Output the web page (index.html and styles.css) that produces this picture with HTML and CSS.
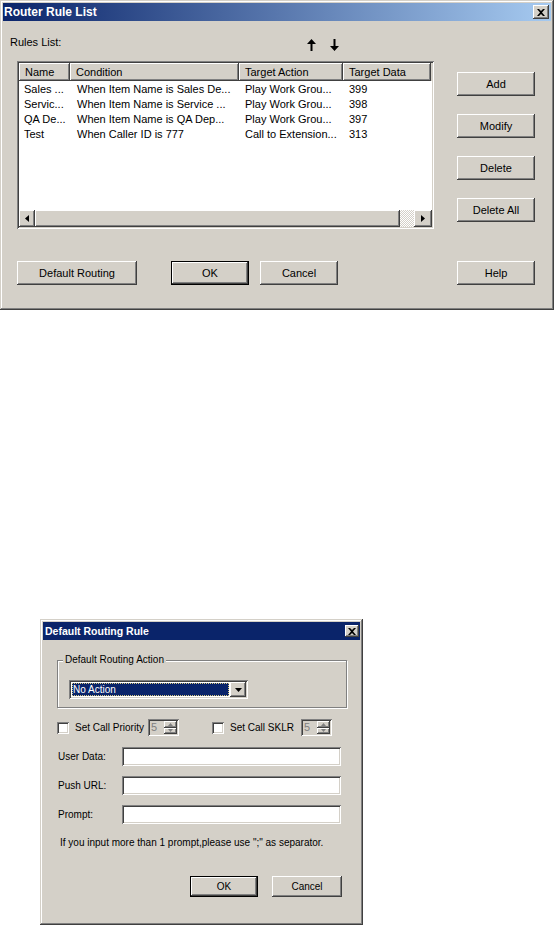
FILE: index.html
```html
<!DOCTYPE html>
<html lang="en">
<head>
    <meta charset="UTF-8">
    <meta name="viewport" content="width=device-width, initial-scale=1.0">
    <title>Router Rule List</title>
    <link rel="stylesheet" href="styles.css">
</head>
<body>
    <div class="win router">
        <div class="titlebar">
            <span>Router Rule List</span>
            <span class="close raised">
                <svg width="8" height="7" viewBox="0 0 8 7"><polygon points="0,0 2,0 4,2 6,0 8,0 5,3.5 8,7 6,7 4,5 2,7 0,7 3,3.5" fill="#000"/></svg>
            </span>
        </div>

        <div class="rules-head">
            <span class="rules-label">Rules List:</span>
            <span class="arrow">
                <svg width="9" height="12" viewBox="0 0 9 12"><polygon points="4.5,0 9,5 5.5,5 5.5,12 3.5,12 3.5,5 0,5" fill="#000"/></svg>
            </span>
            <span class="arrow arrow-down">
                <svg width="9" height="12" viewBox="0 0 9 12"><polygon points="4.5,12 9,7 5.5,7 5.5,0 3.5,0 3.5,7 0,7" fill="#000"/></svg>
            </span>
        </div>

        <div class="main-row">
            <div class="listview sunken">
                <div class="lv-header">
                    <div class="lv-head raised c-name">Name</div>
                    <div class="lv-head raised c-cond">Condition</div>
                    <div class="lv-head raised c-action">Target Action</div>
                    <div class="lv-head raised c-data">Target Data</div>
                </div>
                <div class="lv-rows">
                    <div class="lv-row">
                        <span class="c-name">Sales ...</span>
                        <span class="c-cond">When Item Name is Sales De...</span>
                        <span class="c-action">Play Work Grou...</span>
                        <span class="c-data">399</span>
                    </div>
                    <div class="lv-row">
                        <span class="c-name">Servic...</span>
                        <span class="c-cond">When Item Name is Service ...</span>
                        <span class="c-action">Play Work Grou...</span>
                        <span class="c-data">398</span>
                    </div>
                    <div class="lv-row">
                        <span class="c-name">QA De...</span>
                        <span class="c-cond">When Item Name is QA Dep...</span>
                        <span class="c-action">Play Work Grou...</span>
                        <span class="c-data">397</span>
                    </div>
                    <div class="lv-row">
                        <span class="c-name">Test</span>
                        <span class="c-cond">When Caller ID is 777</span>
                        <span class="c-action">Call to Extension...</span>
                        <span class="c-data">313</span>
                    </div>
                </div>
                <div class="hscroll">
                    <span class="sb-btn raised">
                        <svg width="4" height="7" viewBox="0 0 4 7"><polygon points="4,0 4,7 0,3.5" fill="#000"/></svg>
                    </span>
                    <span class="sb-thumb raised"></span>
                    <span class="sb-track"></span>
                    <span class="sb-btn sb-right raised">
                        <svg width="4" height="7" viewBox="0 0 4 7"><polygon points="0,0 4,3.5 0,7" fill="#000"/></svg>
                    </span>
                </div>
            </div>

            <div class="side-btns">
                <button class="btn raised">Add</button>
                <button class="btn raised">Modify</button>
                <button class="btn raised">Delete</button>
                <button class="btn raised">Delete All</button>
            </div>
        </div>

        <div class="bottom-row">
            <button class="btn raised btn-wide">Default Routing</button>
            <button class="btn default btn-ok">OK</button>
            <button class="btn raised btn-cancel">Cancel</button>
            <button class="btn raised btn-help">Help</button>
        </div>
    </div>

    <div class="win rule">
        <div class="titlebar">
            <span>Default Routing Rule</span>
            <span class="close raised">
                <svg width="8" height="7" viewBox="0 0 8 7"><polygon points="0,0 2,0 4,2 6,0 8,0 5,3.5 8,7 6,7 4,5 2,7 0,7 3,3.5" fill="#000"/></svg>
            </span>
        </div>

        <div class="rule-body">
            <fieldset class="group">
                <legend>Default Routing Action</legend>
                <div class="combo sunken">
                    <span class="combo-value">No Action</span>
                    <span class="combo-drop raised">
                        <svg width="7" height="4" viewBox="0 0 7 4"><polygon points="0,0 7,0 3.5,4" fill="#000"/></svg>
                    </span>
                </div>
            </fieldset>

            <div class="check-row">
                <span class="checkbox sunken"></span>
                <span class="check-label label-priority">Set Call Priority</span>
                <span class="spin sunken">
                    <span class="spin-value">5</span>
                    <span class="spin-btns">
                        <span class="spin-btn raised"><svg width="5" height="3" viewBox="0 0 5 3"><polygon points="2.5,0 5,3 0,3" fill="#808080"/></svg></span>
                        <span class="spin-btn raised"><svg width="5" height="3" viewBox="0 0 5 3"><polygon points="0,0 5,0 2.5,3" fill="#808080"/></svg></span>
                    </span>
                </span>
                <span class="checkbox sunken check-second"></span>
                <span class="check-label label-sklr">Set Call SKLR</span>
                <span class="spin sunken">
                    <span class="spin-value">5</span>
                    <span class="spin-btns">
                        <span class="spin-btn raised"><svg width="5" height="3" viewBox="0 0 5 3"><polygon points="2.5,0 5,3 0,3" fill="#808080"/></svg></span>
                        <span class="spin-btn raised"><svg width="5" height="3" viewBox="0 0 5 3"><polygon points="0,0 5,0 2.5,3" fill="#808080"/></svg></span>
                    </span>
                </span>
            </div>

            <div class="field-row first">
                <span class="field-label">User Data:</span>
                <span class="textbox sunken"></span>
            </div>
            <div class="field-row">
                <span class="field-label">Push URL:</span>
                <span class="textbox sunken"></span>
            </div>
            <div class="field-row">
                <span class="field-label">Prompt:</span>
                <span class="textbox sunken"></span>
            </div>

            <p class="note">If you input more than 1 prompt,please use ";" as separator.</p>

            <div class="rule-btns">
                <button class="btn default rule-ok">OK</button>
                <button class="btn raised rule-cancel">Cancel</button>
            </div>
        </div>
    </div>
</body>
</html>
```

FILE: styles.css
```css
body {
    margin: 0;
    background-color: #fff;
    font-family: "Liberation Sans", Arial, sans-serif;
    font-size: 11px;
    color: #000;
}

/* classic 3d edges */
.raised {
    background-color: #d4d0c8;
    box-shadow: inset -1px -1px #404040, inset 1px 1px #fff, inset -2px -2px #808080, inset 2px 2px #d4d0c8;
}
.sunken {
    box-shadow: inset 1px 1px #808080, inset -1px -1px #fff, inset 2px 2px #404040, inset -2px -2px #d4d0c8;
}

.win {
    box-sizing: border-box;
    padding: 3px;
    background-color: #d4d0c8;
    box-shadow: inset -1px -1px #404040, inset 1px 1px #d4d0c8, inset -2px -2px #808080, inset 2px 2px #fff;
}
.titlebar {
    display: flex;
    align-items: center;
    justify-content: space-between;
    height: 18px;
    padding: 0 2px 0 1px;
    color: #fff;
    font-weight: bold;
    font-size: 12px;
}
.close {
    display: flex;
    align-items: center;
    justify-content: center;
    width: 16px;
    height: 14px;
}

.btn {
    box-sizing: border-box;
    width: 78px;
    height: 24px;
    padding: 0;
    border: none;
    font: inherit;
    color: #000;
    background-color: #d4d0c8;
}
.btn.default {
    box-shadow: inset 0 0 0 1px #000, inset -2px -2px #404040, inset 2px 2px #fff, inset -3px -3px #808080;
}

/* Router Rule List */
.router {
    width: 554px;
    height: 310px;
}
.router .titlebar {
    background: linear-gradient(to right, #0a246a, #a6caf0);
}
.rules-head {
    display: flex;
    box-sizing: border-box;
    height: 40px;
    padding: 14px 0 0 7px;
    line-height: 15px;
}
.rules-label {
    width: 297px;
}
.arrow svg {
    display: block;
    margin-top: 4px;
}
.arrow-down {
    margin-left: 14px;
}
.main-row {
    display: flex;
    padding-left: 14px;
}
.listview {
    display: flex;
    flex-direction: column;
    box-sizing: border-box;
    width: 417px;
    height: 168px;
    padding: 2px;
    background-color: #fff;
}
.lv-header {
    display: flex;
    height: 18px;
    background-color: #d4d0c8;
}
.lv-head {
    box-sizing: border-box;
    line-height: 18px;
}
.lv-rows {
    flex: 1;
    padding-top: 1px;
}
.lv-row {
    display: flex;
    height: 15px;
    line-height: 15px;
    white-space: nowrap;
}
.c-name, .c-cond, .c-action, .c-data {
    box-sizing: border-box;
    padding-left: 6px;
    overflow: hidden;
}
.lv-row .c-name {
    padding-left: 5px;
}
.lv-row .c-cond {
    padding-left: 7px;
}
.c-name { width: 51px; }
.c-cond { width: 169px; }
.c-action { width: 104px; }
.c-data { width: 88px; }
.hscroll {
    display: flex;
    height: 17px;
    background-color: #d4d0c8;
}
.sb-btn {
    display: flex;
    align-items: center;
    justify-content: center;
    width: 16px;
}
.sb-right {
    width: 18px;
}
.sb-thumb {
    width: 365px;
}
.sb-track {
    flex: 1;
    background: repeating-conic-gradient(#d4d0c8 0 25%, #fff 0 50%) 0 0 / 2px 2px;
}
.side-btns {
    display: flex;
    flex-direction: column;
    gap: 18px;
    margin-left: 23px;
    padding-top: 11px;
}
.bottom-row {
    display: flex;
    margin-top: 32px;
    padding: 0 16px 0 14px;
}
.btn-wide {
    width: 120px;
}
.btn-ok {
    margin-left: 34px;
}
.btn-cancel {
    margin-left: 11px;
}
.btn-help {
    margin-left: auto;
}

/* Default Routing Rule */
.rule {
    width: 323px;
    height: 306px;
    margin: 309px 0 0 40px;
    font-size: 10px;
}
.rule .titlebar {
    padding: 0 1px 0 2px;
    background-color: #0a246a;
    font-size: 10.5px;
}
.rule .close {
    width: 14px;
    height: 12px;
}
.rule-body {
    padding-left: 14px;
}
.group {
    box-sizing: border-box;
    width: 290px;
    margin: 13px 0 0;
    padding: 13px 11px 8px;
    border: 1px solid #808080;
    box-shadow: inset 1px 1px #fff, 1px 1px #fff;
}
.group legend {
    margin-left: -6px;
    padding: 0 2px;
    line-height: 14px;
    background-color: #d4d0c8;
}
.combo {
    display: flex;
    box-sizing: border-box;
    width: 179px;
    height: 19px;
    padding: 2px;
    background-color: #fff;
}
.combo-value {
    flex: 1;
    margin: 1px;
    padding-left: 1px;
    line-height: 13px;
    background-color: #0a246a;
    color: #fff;
    outline: 1px dotted #d8c880;
    outline-offset: -1px;
}
.combo-drop {
    display: flex;
    align-items: center;
    justify-content: center;
    width: 16px;
}
.check-row {
    display: flex;
    align-items: center;
    height: 17px;
    margin-top: 11px;
}
.checkbox {
    box-sizing: border-box;
    width: 12px;
    height: 12px;
    background-color: #fff;
}
.check-label {
    margin-left: 6px;
}
.label-priority {
    width: 73px;
}
.label-sklr {
    width: 71px;
}
.check-second {
    margin-left: 33px;
}
.spin {
    display: flex;
    box-sizing: border-box;
    width: 31px;
    height: 17px;
    padding: 2px;
    background-color: #d4d0c8;
}
.spin-value {
    flex: 1;
    padding-left: 1px;
    line-height: 13px;
    color: #808080;
    font-size: 11px;
}
.spin-btns {
    display: flex;
    flex-direction: column;
    width: 13px;
}
.spin-btn {
    display: flex;
    flex: 1;
    align-items: center;
    justify-content: center;
}
.field-row {
    display: flex;
    align-items: center;
    margin-top: 10px;
}
.field-row.first {
    margin-top: 11px;
}
.field-label {
    box-sizing: border-box;
    width: 65px;
    padding-left: 1px;
}
.textbox {
    box-sizing: border-box;
    width: 219px;
    height: 19px;
    background-color: #fff;
}
.note {
    margin: 12px 0 0;
    padding-left: 3px;
    line-height: 14px;
}
.rule-btns {
    display: flex;
    justify-content: flex-end;
    gap: 14px;
    margin-top: 26px;
    padding-right: 18px;
}
.rule .btn {
    height: 21px;
}
.rule-ok {
    width: 68px;
}
.rule-cancel {
    width: 70px;
}
```
